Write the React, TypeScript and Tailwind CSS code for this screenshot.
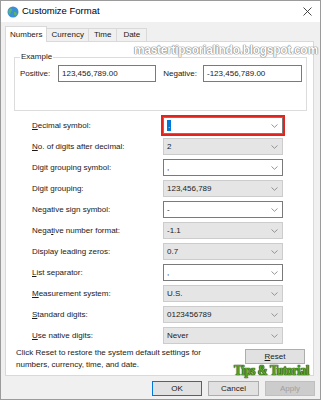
import React from "react";

const Chevron = () => (
  <svg width="7" height="4" viewBox="0 0 7 4" className="shrink-0">
    <polyline points="0.5,0.5 3.5,3.3 6.5,0.5" fill="none" stroke="#8a8a8a" strokeWidth="0.9" />
  </svg>
);

const Combo = ({ value, editable, selected }: { value: string; editable?: boolean; selected?: boolean }) => (
  <div
    className={`w-[120px] h-[17px] flex items-center justify-between pl-[3px] pr-[4px] border ${
      editable ? "bg-white border-[#7a7a7a]" : "bg-[#e5e5e5] border-[#cccccc]"
    }`}
  >
    {selected ? (
      <span className="bg-[#0078d7] text-white px-[1px] leading-[11px]">{value}</span>
    ) : (
      <span className="text-[#222]">{value}</span>
    )}
    <Chevron />
  </div>
);

const rows: { label: React.ReactNode; value: string; editable?: boolean }[] = [
  { label: <><u>D</u>ecimal symbol:</>, value: ".", editable: true },
  { label: <><u>N</u>o. of digits after decimal:</>, value: "2" },
  { label: <>Digit grouping symbol:</>, value: ",", editable: true },
  { label: <>Digit grouping:</>, value: "123,456,789" },
  { label: <>Ne<u>g</u>ative sign symbol:</>, value: "-", editable: true },
  { label: <>Nega<u>t</u>ive number format:</>, value: "-1.1" },
  { label: <>Display leading zeros:</>, value: "0.7" },
  { label: <><u>L</u>ist separator:</>, value: ",", editable: true },
  { label: <><u>M</u>easurement system:</>, value: "U.S." },
  { label: <><u>S</u>tandard digits:</>, value: "0123456789" },
  { label: <><u>U</u>se native digits:</>, value: "Never" },
];

export default function App() {
  return (
    <div className="w-[321px] h-[400px] relative bg-[#f0f0f0] border border-[#9b9b9b] font-['Liberation_Sans',sans-serif] text-[8px] text-[#1a1a1a] overflow-hidden">
      {/* title bar */}
      <div className="h-[21px] bg-white flex items-center pl-[6px] pr-[8px]">
        <svg width="12" height="12" viewBox="0 0 12 12">
          <circle cx="6" cy="6" r="5.5" fill="#3b8fd8" />
          <path d="M3 2.5 C5 2 6 4 4.5 5 C3 6 4 8 2.5 8.5 C1 7 1 4 3 2.5Z" fill="#5cb85c" />
          <path d="M7 6 C9 5.5 10.5 7 9.5 9 C8.5 10 7 9.5 7.2 8 Z" fill="#5cb85c" />
        </svg>
        <span className="ml-[3px] text-[9.5px] text-black">Customize Format</span>
        <svg width="9" height="9" viewBox="0 0 9 9" className="ml-auto">
          <path d="M0.5 0.5 L8.5 8.5 M8.5 0.5 L0.5 8.5" stroke="#333" strokeWidth="0.9" />
        </svg>
      </div>

      {/* tabs */}
      <div className="flex items-end pl-[4px] mt-[3px] h-[16px]">
        <div className="h-[16px] px-[4px] bg-white border border-b-0 border-[#d9d9d9] flex items-center relative z-10 -mb-[1px]">
          Numbers
        </div>
        <div className="h-[13px] px-[4px] border border-l-0 border-b-0 border-[#d9d9d9] flex items-center">Currency</div>
        <div className="h-[13px] px-[5px] border border-l-0 border-b-0 border-[#d9d9d9] flex items-center">Time</div>
        <div className="h-[13px] px-[6px] border border-l-0 border-b-0 border-[#d9d9d9] flex items-center">Date</div>
      </div>

      {/* panel */}
      <div className="ml-[4px] w-[309px] h-[335px] bg-white border border-[#d9d9d9] px-[8px] pt-[9px]">
        <fieldset className="border border-[#dcdcdc] pl-[5px] pr-[4px] pb-[28px] mr-[-2px]">
          <legend className="px-[1px] leading-[12px]">Example</legend>
          <div className="flex items-center mt-[2px]">
            <span className="w-[38px]">Positive:</span>
            <div className="w-[98px] h-[17px] border border-[#7a7a7a] pl-[3px] flex items-center">123,456,789.00</div>
            <span className="flex-1 text-right pr-[6px]">Negative:</span>
            <div className="w-[99px] h-[17px] border border-[#7a7a7a] pl-[3px] flex items-center">-123,456,789.00</div>
          </div>
        </fieldset>

        <div className="grid grid-cols-[131px_120px] gap-y-[4px] pl-[18px] mt-[6px] items-center">
          {rows.map((r, i) => (
            <React.Fragment key={i}>
              <span>{r.label}</span>
              {i === 0 ? (
                <div className="outline-2 outline-[#e3241d]">
                  <Combo value={r.value} editable selected />
                </div>
              ) : (
                <Combo value={r.value} editable={r.editable} />
              )}
            </React.Fragment>
          ))}
        </div>

        <div className="flex mt-[3px] pl-[2px]">
          <p className="leading-[12px]">
            Click Reset to restore the system default settings for
            <br />
            numbers, currency, time, and date.
          </p>
          <button className="ml-auto mt-[2px] w-[60px] h-[15px] bg-[#e1e1e1] border border-[#adadad] flex items-center justify-center">
            <span><u>R</u>eset</span>
          </button>
        </div>
      </div>

      {/* dialog buttons */}
      <div className="flex justify-end gap-[6px] pr-[5px] mt-[5px]">
        <button className="w-[50px] h-[15px] bg-[#e1e1e1] border border-[#0078d7]">OK</button>
        <button className="w-[51px] h-[15px] bg-[#e1e1e1] border border-[#adadad]">Cancel</button>
        <button className="w-[50px] h-[15px] bg-[#cccccc] border border-[#bfbfbf] text-[#a0a0a0]">Apply</button>
      </div>

      {/* watermarks */}
      <div className="absolute left-[133px] top-[40px] whitespace-nowrap font-['Liberation_Sans',sans-serif] font-bold text-[12px] text-white tracking-[-0.3px] [text-shadow:0_0_1px_#777,0_0_1px_#777,0_0_1px_#777]">
        mastertipsorialindo.blogspot.com
      </div>
      <div className="absolute left-[233px] top-[358px] whitespace-nowrap origin-left scale-x-[0.8] font-['Liberation_Serif',serif] font-bold text-[15px] text-[#5ba52a] tracking-[-0.4px] [text-shadow:0_0_1px_#1d3d0a,0_0_1px_#1d3d0a,0_0_1px_#1d3d0a]">
        Tips &amp; Tutorial
      </div>
    </div>
  );
}
